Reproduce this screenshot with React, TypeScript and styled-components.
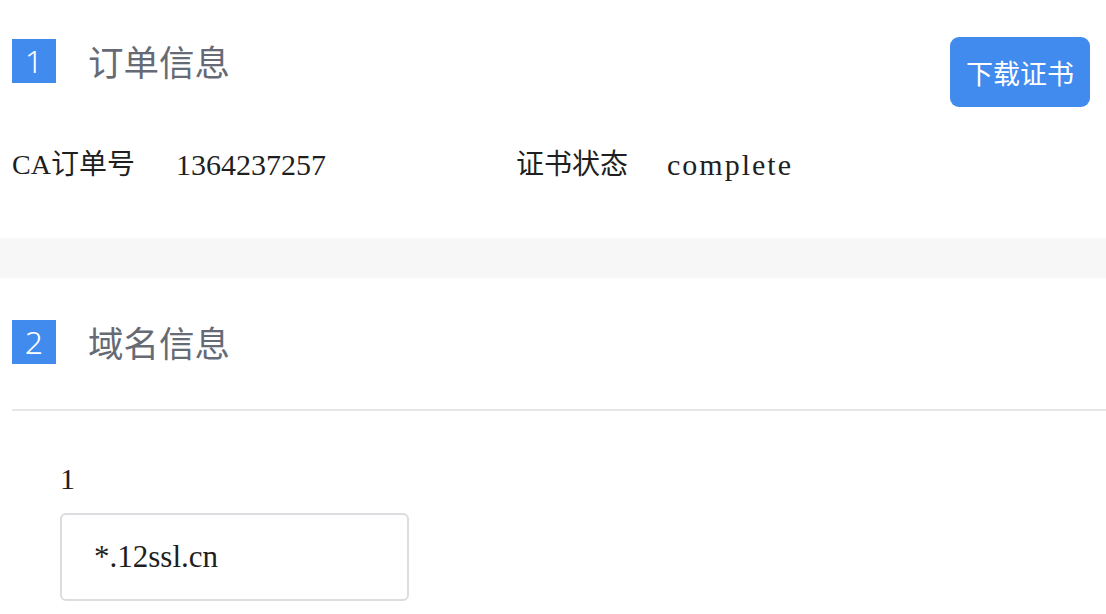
import React from "react";
import styled, { createGlobalStyle } from "styled-components";

const GlobalStyle = createGlobalStyle`
	html, body {
		margin: 0;
		padding: 0;
		background: #fff;
		font-family: "Liberation Serif", "Noto Sans CJK SC", serif;
		color: #1f1f1f;
	}
`;

const Page = styled.div`
	width: 1106px;
	min-height: 614px;
	overflow: hidden;
`;
const OrderSection = styled.section`
	padding: 37px 16px 53px 12px;
`;
const HeaderRow = styled.div`
	display: flex;
	justify-content: space-between;
	align-items: flex-start;
`;
const TitleGroup = styled.div<{ $offset?: number }>`
	display: flex;
	align-items: center;
	gap: 32px;
	margin-top: ${(p) => p.$offset ?? 0}px;
`;
const StepBadge = styled.span`
	display: flex;
	align-items: center;
	justify-content: center;
	width: 44px;
	height: 44px;
	background: #418bef;
	color: #fff;
	font-family: "Noto Sans", "Liberation Sans", sans-serif;
	font-weight: 300;
	font-size: 32px;
	line-height: 1;
`;
const Title = styled.h2`
	margin: 0;
	font-family: "Noto Sans CJK SC", sans-serif;
	font-weight: 400;
	font-size: 35.5px;
	color: #666a75;
	line-height: 44px;
`;
const DownloadButton = styled.button`
	width: 140px;
	height: 70px;
	border: none;
	border-radius: 9px;
	background: #418bef;
	color: #fff;
	font-family: "Noto Sans CJK SC", sans-serif;
	font-size: 27px;
	padding: 0;
	cursor: pointer;
`;
const InfoGrid = styled.div`
	display: grid;
	grid-template-columns: 164px 340px 151px auto;
	margin-top: 38px;
	line-height: 40px;
`;
const Label = styled.span`
	font-size: 28px;
`;
const Value = styled.span<{ $spread?: number }>`
	font-size: 30px;
	letter-spacing: ${(p) => p.$spread ?? 0}px;
`;
const Band = styled.div`
	height: 40px;
	background: #f7f7f7;
`;
const DomainSection = styled.section`
	padding-top: 42px;
`;
const DomainHeader = styled.div`
	padding-left: 12px;
`;
const Divider = styled.hr`
	margin: 45px 0 0 12px;
	border: none;
	border-top: 2px solid #e6e6e6;
`;
const DomainList = styled.div`
	padding: 48px 0 0 60px;
`;
const DomainIndex = styled.div`
	font-size: 30px;
	line-height: 40px;
`;
const DomainBox = styled.div`
	box-sizing: border-box;
	width: 349px;
	height: 88px;
	margin-top: 14px;
	padding-left: 32px;
	display: flex;
	align-items: center;
	border: 2px solid #dcdde0;
	border-radius: 6px;
	font-size: 31px;
`;

const App = () => {
	const domains = ["*.12ssl.cn"];
	return (
		<Page>
			<GlobalStyle />
			<OrderSection>
				<HeaderRow>
					<TitleGroup $offset={2}>
						<StepBadge>1</StepBadge>
						<Title>订单信息</Title>
					</TitleGroup>
					<DownloadButton>下载证书</DownloadButton>
				</HeaderRow>
				<InfoGrid>
					<Label>CA订单号</Label>
					<Value>1364237257</Value>
					<Label>证书状态</Label>
					<Value $spread={2}>complete</Value>
				</InfoGrid>
			</OrderSection>
			<Band />
			<DomainSection>
				<DomainHeader>
					<TitleGroup>
						<StepBadge>2</StepBadge>
						<Title>域名信息</Title>
					</TitleGroup>
				</DomainHeader>
				<Divider />
				{domains.map((d, i) => (
					<DomainList key={d}>
						<DomainIndex>{i + 1}</DomainIndex>
						<DomainBox>{d}</DomainBox>
					</DomainList>
				))}
			</DomainSection>
		</Page>
	);
};

export default App;
